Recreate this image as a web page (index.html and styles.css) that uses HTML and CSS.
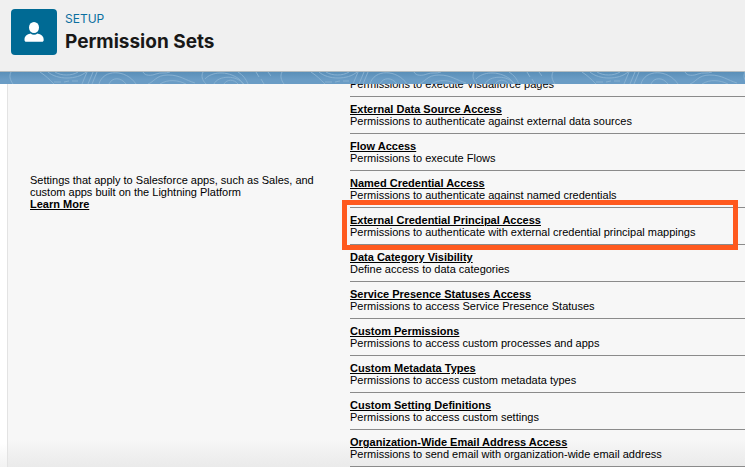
FILE: index.html
```
<!DOCTYPE html>
<html lang="en">
<head>
  <meta charset="UTF-8">
  <meta name="viewport" content="width=device-width, initial-scale=1.0">
  <title>Permission Sets</title>
  <link rel="stylesheet" href="styles.css">
</head>
<body>
  <header class="page-header">
    <div class="header-icon">
      <svg viewBox="0 0 46 46" width="46" height="46" aria-hidden="true">
        <ellipse cx="23" cy="18.500" rx="5" ry="5.600" fill="#fff"/>
        <path d="M13.500 31c0-4 2.300-5.400 6-6.400 2 1.600 5 1.600 7 0 3.700 1 6.200 2.400 6.200 6.400 0 1.100-.7 1.800-1.700 1.800H15.200c-1 0-1.700-.7-1.700-1.800z" fill="#fff"/>
      </svg>
    </div>
    <div class="header-text">
      <p class="eyebrow">SETUP</p>
      <h1>Permission Sets</h1>
    </div>
  </header>

  <div class="band">
    <svg width="100%" height="12" aria-hidden="true">
      <defs>
        <pattern id="contours" width="271" height="12" patternUnits="userSpaceOnUse">
          <g fill="none" stroke="#86b0d1" stroke-width="1">
            <path d="M11 0c-2 4-1 8 2 12"/>
            <path d="M40 0c6 4 9 7 14 12M48 0c9 8 29 8 38 0M55 0c6 4 17 4 23 0"/>
            <path d="M54 10h7M64 10l5-1M72 9h6M82 12l5-12M88 12l5-12M92 12l5-12"/>
            <path d="M99 12c4-15 27-15 37 0M109 12c3-7 12-7 17 0"/>
            <path d="M143 0c2 4 8 4 13 2s9 0 14-2M148 12c6-2 8-9 20-9s17 5 27 8M160 12c8-5 18-4 26 0"/>
            <path d="M203 0c-2 4-1 8 3 12M205 7c6-7 22-9 34 0l5 5M214 12c4-9 24-9 29 0M224 12c3-5 10-5 14 0M238 0c5 3 8 7 10 12"/>
            <path d="M256 0l3 5M261 7l3 5M268 0l3 4"/>
          </g>
        </pattern>
      </defs>
      <rect width="100%" height="12" fill="url(#contours)"/>
    </svg>
  </div>

  <main class="panel">
    <section class="intro">
      <p>Settings that apply to Salesforce apps, such as Sales, and custom apps built on the Lightning Platform</p>
      <a href="#learn-more">Learn More</a>
    </section>
    <ul class="settings">
      <li>
        <a href="#visualforce">Visualforce Page Access</a>
        <p>Permissions to execute Visualforce pages</p>
      </li>
      <li>
        <a href="#data-source">External Data Source Access</a>
        <p>Permissions to authenticate against external data sources</p>
      </li>
      <li>
        <a href="#flow">Flow Access</a>
        <p>Permissions to execute Flows</p>
      </li>
      <li>
        <a href="#named-credential">Named Credential Access</a>
        <p>Permissions to authenticate against named credentials</p>
      </li>
      <li class="highlight">
        <a href="#credential-principal">External Credential Principal Access</a>
        <p>Permissions to authenticate with external credential principal mappings</p>
      </li>
      <li>
        <a href="#data-category">Data Category Visibility</a>
        <p>Define access to data categories</p>
      </li>
      <li>
        <a href="#presence-statuses">Service Presence Statuses Access</a>
        <p>Permissions to access Service Presence Statuses</p>
      </li>
      <li>
        <a href="#custom-permissions">Custom Permissions</a>
        <p>Permissions to access custom processes and apps</p>
      </li>
      <li>
        <a href="#metadata-types">Custom Metadata Types</a>
        <p>Permissions to access custom metadata types</p>
      </li>
      <li>
        <a href="#setting-definitions">Custom Setting Definitions</a>
        <p>Permissions to access custom settings</p>
      </li>
      <li>
        <a href="#email-address">Organization-Wide Email Address Access</a>
        <p>Permissions to send email with organization-wide email address</p>
      </li>
    </ul>
  </main>
</body>
</html>
```

FILE: styles.css
```
* {
  box-sizing: border-box;
}
body {
  margin: 0;
  height: 100vh;
  display: flex;
  flex-direction: column;
  overflow: hidden;
  background: linear-gradient(to top, #f2f2f2, #fff 24px);
  color: #000;
  font-family: "Liberation Sans", Arial, sans-serif;
  font-size: 11px;
  line-height: 12px;
}
h1, p, ul {
  margin: 0;
  padding: 0;
}
.page-header {
  display: flex;
  gap: 8px;
  padding: 9px 11px 16px;
  background: #f0f0f0;
  border-bottom: 1px solid #b4bcc0;
  font-family: Inter, sans-serif;
}
.header-icon {
  height: 46px;
  border-radius: 4px;
  background: #006a94;
}
.header-icon svg {
  display: block;
}
.eyebrow {
  color: #0b6f9f;
  font-size: 12px;
  line-height: 20px;
}
h1 {
  color: #181818;
  font-size: 19px;
  line-height: 26px;
}
.band {
  flex: none;
  height: 12px;
  background: linear-gradient(#5a8fb8, #6a9cc5 60%);
}
.band svg {
  display: block;
}
.panel {
  flex: 1;
  min-height: 0;
  display: grid;
  grid-template-columns: 300px 1fr;
  column-gap: 20px;
  margin-left: 7px;
  padding-left: 22px;
  border-left: 1px solid #e3e3e3;
  background: linear-gradient(to top, #eaeaea, #f7f7f7 28px);
  overflow: hidden;
}
.intro {
  padding-top: 90px;
}
a {
  color: #000;
  font-weight: bold;
}
/* list is scrolled, the first row sits partly under the band */
.settings {
  margin-top: -24px;
  list-style: none;
}
.settings li {
  padding: 6px 0;
  border-bottom: 1px solid #8b8b8b;
}
.settings a {
  display: block;
}
.highlight {
  position: relative;
}
.highlight::after {
  content: "";
  position: absolute;
  inset: -8px 7px -6px -8px;
  border: 5px solid #ff5a1f;
  pointer-events: none;
}
```
